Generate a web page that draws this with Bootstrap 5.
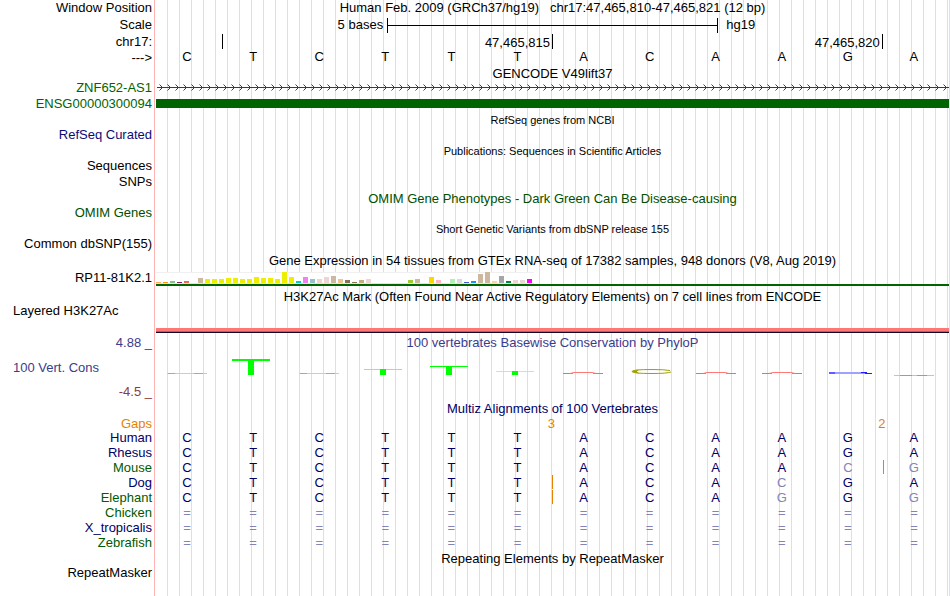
<!DOCTYPE html>
<html lang="en">
<head>
  <meta charset="UTF-8" />
  <title>Human chr17:47,465,810-47,465,821 – Genome Browser</title>
  <meta name="viewport" content="width=device-width, initial-scale=1" />
  <link href="https://cdn.jsdelivr.net/npm/bootstrap@5.3.0/dist/css/bootstrap.min.css" rel="stylesheet" />
  <style>
    body {
      font-family: "Liberation Sans", Arial, sans-serif;
      font-size: 13px;
      line-height: 14px;
      color: #000;
      background: #fff;
    }
    /* label column, pink divider, then a guide line every 12px */
    .browser {
      padding-right: 1px;
      background:
        linear-gradient(to right, #fff 154px, #ffb4b4 154px, #ffb4b4 155px, #fff 155px, #fff 156px, transparent 156px),
        repeating-linear-gradient(to right, #dcdcf5 0, #dcdcf5 1px, transparent 1px, transparent 12px) -1px 0;
    }
    .track-label {
      flex: 0 0 156px;
      padding-right: 4px;
      text-align: right;
      white-space: nowrap;
    }
    .track-label.start, .label-start { text-align: left; padding-left: 13px; }
    .track-data { flex: 1 1 0; min-width: 0; }
    .track-title {
      margin: 0;
      padding-left: 156px;
      font-size: 13px;
      font-weight: 400;
      line-height: 17px;
      text-align: center;
      white-space: nowrap;
    }
    .track-title.minor { font-size: 11px; }
    .track-title.line-15 { line-height: 15px; }
    .empty-track { padding-bottom: 2px; line-height: 12px; }
    .line-16 { line-height: 16px; }
    .line-17 { line-height: 17px; }
    .line-18 { line-height: 18px; }

    .gene { color: #006400; }
    .refseq { color: #0c0c78; }
    .omim { color: #005000; }
    .cons { color: #3c3c8c; }
    .cons-neg { color: #8c3c3c; }
    .multiz { color: #000064; }
    .species-alt { color: #005a00; }
    .gap { color: #e68200; }

    .scale-lead { width: 29.15%; padding-right: 4px; }
    .scale-rule {
      width: 41.75%;
      height: 15px;
      border: solid #000;
      border-width: 0 1px;
      background: linear-gradient(#000, #000) 0 7px / 100% 1px no-repeat;
    }
    .tick-first { flex: 0 0 8.3333%; }
    .tick {
      flex: 0 0 41.6%;
      height: 15px;
      padding-right: 2px;
      line-height: 18px;
      text-align: right;
      border-left: 1px solid #000;
    }
    .tick.tick-last { flex: 1 1 0; }
    .bases > span { flex: 1 1 0; padding-right: 4px; line-height: 13px; text-align: center; }

    .exon-bar { height: 9px; background: #006400; }

    .gtex { height: 19px; padding-top: 3px; }
    .gtex-chart {
      width: 378px;
      height: 12px;
      background: #fff;
      border-top: 1px solid #f0f0f0;
      border-bottom: 1px solid #e4e4e4;
    }
    .gtex-chart > i { width: 5px; margin-right: 2px; }
    .gtex-gene { height: 2px; background: #006400; }

    .h3k27ac { height: 29px; padding-bottom: 1px; line-height: 12px; }
    .h3k27ac-band {
      height: 5px;
      background: linear-gradient(#ff7878 0, #ff7878 3px, #e65032 3px, #e65032 4px, #140a28 4px);
    }

    .phylop { height: 66px; line-height: 17px; }
    .phylop-logo > svg { flex: 1 1 0; min-width: 0; height: 28px; }

    .align-table { width: 100%; table-layout: fixed; line-height: 15px; color: #000064; }
    .align-table th { padding: 0 4px 0 0; font-weight: 400; text-align: right; }
    .align-table td { padding: 0 4px 0 0; text-align: center; }
    .align-table .label-col { width: 156px; }
    .align-table .gaps-row { line-height: 13px; }
    .align-table .gaps-row td { padding-right: 2px; }
    .align-table .differs { color: #8484b4; }
    .align-table .insert { background: linear-gradient(#e68200, #e68200) 0 0 / 1px 14px no-repeat; }
  </style>
</head>
<body>

  <main class="browser min-vh-100">

    <!-- Position, scale and ruler -->
    <div class="d-flex line-16">
      <div class="track-label">Window Position</div>
      <div class="track-data text-center text-nowrap">Human Feb. 2009 (GRCh37/hg19)&nbsp;&nbsp; chr17:47,465,810-47,465,821 (12 bp)</div>
    </div>
    <div class="d-flex line-18">
      <div class="track-label">Scale</div>
      <div class="track-data d-flex align-items-center">
        <div class="scale-lead text-end text-nowrap">5 bases</div>
        <div class="scale-rule"></div>
        <div class="ps-2">hg19</div>
      </div>
    </div>
    <div class="d-flex line-16">
      <div class="track-label">chr17:</div>
      <div class="track-data d-flex">
        <div class="tick-first"></div>
        <div class="tick">47,465,815</div>
        <div class="tick">47,465,820</div>
        <div class="tick tick-last"></div>
      </div>
    </div>
    <div class="d-flex line-16">
      <div class="track-label">---&gt;</div>
      <div class="track-data d-flex bases" id="bases"></div>
    </div>

    <!-- GENCODE -->
    <h2 class="track-title line-15">GENCODE V49lift37</h2>
    <div class="d-flex gene">
      <div class="track-label">ZNF652-AS1</div>
      <div class="track-data">
        <svg class="d-block" width="100%" height="14" aria-hidden="true">
          <defs>
            <pattern id="intron" x="1" y="0" width="8" height="14" patternUnits="userSpaceOnUse">
              <path d="M0 6.5H8M2.5 3.5L5.5 6.5L2.5 9.5" fill="none" stroke="#006400" />
            </pattern>
          </defs>
          <rect x="1" width="100%" height="14" fill="url(#intron)" />
        </svg>
      </div>
    </div>
    <div class="d-flex align-items-center gene line-17">
      <div class="track-label">ENSG00000300094</div>
      <div class="track-data"><div class="exon-bar"></div></div>
    </div>

    <!-- Tracks with no items in this window -->
    <h2 class="track-title minor">RefSeq genes from NCBI</h2>
    <div class="d-flex empty-track refseq"><div class="track-label">RefSeq Curated</div></div>
    <h2 class="track-title minor">Publications: Sequences in Scientific Articles</h2>
    <div class="d-flex empty-track"><div class="track-label">Sequences</div></div>
    <div class="d-flex line-16"><div class="track-label">SNPs</div></div>
    <h2 class="track-title omim">OMIM Gene Phenotypes - Dark Green Can Be Disease-causing</h2>
    <div class="d-flex empty-track omim"><div class="track-label">OMIM Genes</div></div>
    <h2 class="track-title minor">Short Genetic Variants from dbSNP release 155</h2>
    <div class="d-flex empty-track"><div class="track-label">Common dbSNP(155)</div></div>

    <!-- GTEx expression -->
    <h2 class="track-title">Gene Expression in 54 tissues from GTEx RNA-seq of 17382 samples, 948 donors (V8, Aug 2019)</h2>
    <div class="d-flex">
      <div class="track-label line-18">RP11-81K2.1</div>
      <div class="track-data gtex">
        <div class="gtex-chart d-flex align-items-end" id="gtexChart"></div>
        <div class="gtex-gene"></div>
      </div>
    </div>

    <!-- ENCODE regulation -->
    <h2 class="track-title">H3K27Ac Mark (Often Found Near Active Regulatory Elements) on 7 cell lines from ENCODE</h2>
    <div class="d-flex h3k27ac">
      <div class="track-label start">Layered H3K27Ac</div>
      <div class="track-data align-self-end"><div class="h3k27ac-band"></div></div>
    </div>

    <!-- Conservation -->
    <div class="d-flex phylop cons">
      <div class="track-label d-flex flex-column justify-content-between">
        <div>4.88 _</div>
        <div class="label-start">100 Vert. Cons</div>
        <div class="cons-neg">-4.5 _</div>
      </div>
      <div class="track-data">
        <div class="text-center text-nowrap">100 vertebrates Basewise Conservation by PhyloP</div>
        <div class="phylop-logo d-flex" id="phylopLogo"></div>
      </div>
    </div>

    <!-- Multiz alignment -->
    <h2 class="track-title multiz">Multiz Alignments of 100 Vertebrates</h2>
    <table class="align-table">
      <colgroup>
        <col class="label-col" />
        <col span="12" />
      </colgroup>
      <thead>
        <tr class="gaps-row gap">
          <th scope="row">Gaps</th>
          <td colspan="5"></td>
          <td colspan="2">3</td>
          <td colspan="3"></td>
          <td colspan="2">2</td>
        </tr>
      </thead>
      <tbody id="alignment"></tbody>
    </table>

    <h2 class="track-title">Repeating Elements by RepeatMasker</h2>
    <div class="d-flex empty-track"><div class="track-label">RepeatMasker</div></div>
  </main>

  <!-- Bootstrap JS -->
  <script src="https://cdn.jsdelivr.net/npm/bootstrap@5.3.0/dist/js/bootstrap.bundle.min.js"></script>

  <script>
    const reference = "CTCTTTACAAGA";

    document.getElementById("bases").innerHTML =
      [...reference].map((b) => `<span>${b}</span>`).join("");

    // species, aligned bases, dark green name, column that follows an insertion
    const species = [
      ["Human", "CTCTTTACAAGA", false, -1],
      ["Rhesus", "CTCTTTACAAGA", false, -1],
      ["Mouse", "CTCTTTACAACG", true, 11],
      ["Dog", "CTCTTTACACGA", false, 6],
      ["Elephant", "CTCTTTACAGGG", true, 6],
      ["Chicken", "============", true, -1],
      ["X_tropicalis", "============", false, -1],
      ["Zebrafish", "============", true, -1],
    ];

    document.getElementById("alignment").innerHTML = species.map(([name, seq, alt, insert]) => {
      const cells = [...seq].map((b, i) => {
        const cls = [b !== reference[i] ? "differs" : "", i === insert ? "insert" : ""].join(" ").trim();
        return `<td class="${cls}">${b}</td>`;
      }).join("");
      return `<tr><th scope="row" class="${alt ? "species-alt" : ""}">${name}</th>${cells}</tr>`;
    }).join("");

    // bar height in px and tissue colour
    const tissues = [
      [1, "#ffaa56"], [1, "#ee9a00"], [2, "#8fbc8f"], [1, "#8b1c62"], [2, "#ee6a50"], [0, "#ff0000"],
      [5, "#cdb79e"], [4, "#eeee00"], [4, "#eeee00"], [4, "#eeee00"], [5, "#eeee00"], [5, "#eeee00"],
      [4, "#eeee00"], [4, "#eeee00"], [6, "#eeee00"], [5, "#eeee00"], [5, "#eeee00"], [4, "#eeee00"],
      [11, "#eeee00"], [6, "#eeee00"], [2, "#00cdcd"], [6, "#ee82ee"], [4, "#9ac0cd"], [4, "#eed5d2"],
      [6, "#eed5d2"], [7, "#cdb79e"], [4, "#eec591"], [3, "#8b7355"], [1, "#8b7355"], [3, "#cdaa7d"],
      [4, "#eed5d2"], [0, "#b452cd"], [0, "#7a378b"], [0, "#cdb79e"], [0, "#cdb79e"], [0, "#cdb79e"],
      [3, "#9acd32"], [4, "#cdb79e"], [0, "#7a67ee"], [6, "#ffd700"], [3, "#ffb6c1"], [0, "#cd9b1d"],
      [4, "#b4eeb4"], [4, "#d9d9d9"], [1, "#3a5fcd"], [2, "#1e90ff"], [9, "#cdb79e"], [11, "#cdb79e"],
      [2, "#ffd39b"], [7, "#a6a6a6"], [2, "#008b45"], [3, "#eed5d2"], [3, "#eed5d2"], [4, "#ff00ff"],
    ];

    document.getElementById("gtexChart").innerHTML = tissues
      .map(([h, color]) => `<i style="height:${h}px;background:${color}"></i>`).join("");

    // flattened logo letters, baseline at y=25
    const tee = (top, bar, color) =>
      `<rect x="10" y="${top}" width="38" height="${bar}" fill="${color}"/>` +
      `<rect x="26" y="${top}" width="6" height="${25 - top}" fill="#00ff00"/>`;
    const flatC = `<path d="M11 23.5H51" stroke="#d2d2a0"/><path d="M12 23.5H19M38 23.5H47" stroke="#b4b450"/>`;
    const flatA = `<path d="M11 23.5H21M41 23.5H51" stroke="#ff6464"/><path d="M18 23.5L22 22.5H40L44 23.5" stroke="#ff7878" fill="none"/>`;
    const logo = [
      flatC,
      tee(9, 2, "#00ff00"),
      flatC,
      tee(19, 1, "#78ff78"),
      tee(16, 1, "#00ff00"),
      tee(21, 1, "#a0ffa0"),
      flatA,
      `<path d="M51 20.5Q45 19.5 33 19.5Q13 19.5 13 21.5Q13 23.5 33 23.5Q48 23.5 52 22" stroke="#a0a000" fill="none"/><path d="M12 21.5L20 19.5L18 21.5L20 23.5Z" fill="#a0a000"/>`,
      flatA,
      flatA,
      `<path d="M12 22.5H50M12 23.5H50" stroke="#a0a0ff"/><path d="M12 23H18M44 22.5H50M48 23.5H55" stroke="#1e1eff"/>`,
      `<path d="M11 25.5H51" stroke="#ffaaaa"/><path d="M17 25.5H29M34 25.5H44" stroke="#f07878"/>`,
    ];

    document.getElementById("phylopLogo").innerHTML = logo
      .map((shape) => `<svg viewBox="0 1 66 28" preserveAspectRatio="xMinYMin" aria-hidden="true">${shape}</svg>`).join("");
  </script>

</body>
</html>
